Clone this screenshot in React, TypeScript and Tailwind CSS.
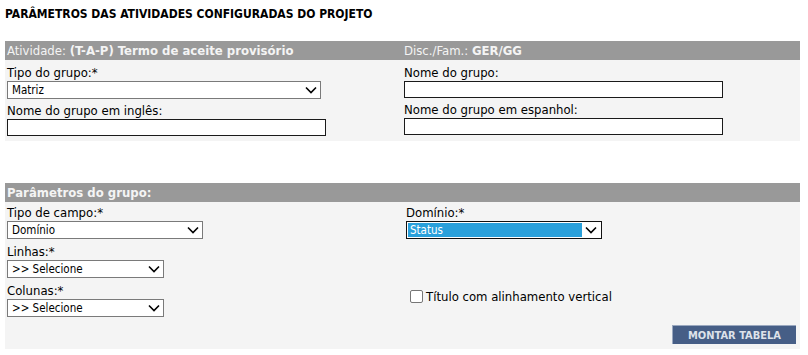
import React from 'react';

const font = 'font-["DejaVu_Sans_Condensed","DejaVu_Sans",Tahoma,sans-serif]';

const Chevron: React.FC = () => (
    <svg width="12" height="8" viewBox="0 0 12 8" className="shrink-0">
        <path d="M1 1.5l5 5 5-5" fill="none" stroke="#000" strokeWidth={1.6} />
    </svg>
);

interface SelectProps {
    value: string;
    width: string;
    active?: boolean;
}

const FakeSelect: React.FC<SelectProps> = ({ value, width, active = false }) => (
    <div
        className={`${width} h-[18px] flex items-center bg-white ${
            active ? 'border border-[#111] p-[1px]' : 'border border-[#7a7a7a]'
        }`}
    >
        <div
            className={`flex-1 h-full flex items-center pt-[1px] text-[11.5px] leading-none ${
                active ? 'bg-[#29a0db] text-white pl-[2px]' : 'pl-[4px] text-black'
            }`}
        >
            {value}
        </div>
        <div className="w-[18px] flex justify-center">
            <Chevron />
        </div>
    </div>
);

const Field: React.FC<{ label: string; children: React.ReactNode; className?: string }> = ({
    label,
    children,
    className = ''
}) => (
    <div className={`flex flex-col ${className}`}>
        <label className="h-[16px] leading-[16px] text-[13px] text-black">{label}</label>
        {children}
    </div>
);

const TextBox: React.FC<{ width: string }> = ({ width }) => (
    <div className={`${width} h-[17px] bg-white border border-[#1a1a1a]`} />
);

export default function App() {
    return (
        <div className={`w-[808px] h-[355px] bg-white ${font}`}>
            {/* Title */}
            <div className="h-[41px] pl-[5px] pt-[5px] text-[12px] font-bold text-black">
                PARÂMETROS DAS ATIVIDADES CONFIGURADAS DO PROJETO
            </div>

            {/* Activity block */}
            <div className="ml-[5px] w-[795px] bg-[#f4f4f4] pb-[5px]">
                <div className="h-[19px] bg-[#999999] grid grid-cols-[399px_1fr] items-center text-[13px] text-[#f4f4f4]">
                    <div className="pl-[2px]">
                        Atividade: <span className="font-bold">(T-A-P) Termo de aceite provisório</span>
                    </div>
                    <div>
                        Disc./Fam.: <span className="font-bold">GER/GG</span>
                    </div>
                </div>
                <div className="grid grid-cols-[399px_1fr] pt-[5px]">
                    <div className="pl-[2px] flex flex-col gap-[4px]">
                        <Field label="Tipo do grupo:*">
                            <FakeSelect value="Matriz" width="w-[314px]" />
                        </Field>
                        <Field label="Nome do grupo em inglês:">
                            <TextBox width="w-[319px]" />
                        </Field>
                    </div>
                    <div className="flex flex-col gap-[4px]">
                        <Field label="Nome do grupo:">
                            <TextBox width="w-[319px]" />
                        </Field>
                        <Field label="Nome do grupo em espanhol:">
                            <TextBox width="w-[319px]" />
                        </Field>
                    </div>
                </div>
            </div>

            {/* Group parameters */}
            <div className="ml-[5px] mt-[42px] w-[795px] bg-[#f4f4f4] pb-[5px]">
                <div className="h-[19px] bg-[#999999] flex items-center pl-[2px] text-[13px] font-bold text-[#f4f4f4]">
                    Parâmetros do grupo:
                </div>
                <div className="grid grid-cols-[401px_1fr] pt-[3px]">
                    <div className="pl-[2px] flex flex-col gap-[5px]">
                        <Field label="Tipo de campo:*">
                            <FakeSelect value="Domínio" width="w-[196px]" />
                        </Field>
                        <Field label="Linhas:*">
                            <FakeSelect value=">> Selecione" width="w-[157px]" />
                        </Field>
                        <Field label="Colunas:*">
                            <FakeSelect value=">> Selecione" width="w-[157px]" />
                        </Field>
                    </div>
                    <div className="flex flex-col">
                        <Field label="Domínio:*">
                            <FakeSelect value="Status" width="w-[196px]" active />
                        </Field>
                        <label className="mt-[48px] ml-[4px] flex items-center gap-[3px] text-[13px] text-black">
                            <span className="w-[13px] h-[13px] bg-white border border-[#767676] rounded-[2px]" />
                            Título com alinhamento vertical
                        </label>
                    </div>
                </div>
                <div className="flex justify-end pr-[4px] mt-[8px]">
                    <button className="w-[124px] h-[19px] bg-[#465e86] border-t border-l border-[#9aa8bf] text-[11px] font-bold text-[#dde2ea] leading-none">
                        MONTAR TABELA
                    </button>
                </div>
            </div>
        </div>
    );
}
